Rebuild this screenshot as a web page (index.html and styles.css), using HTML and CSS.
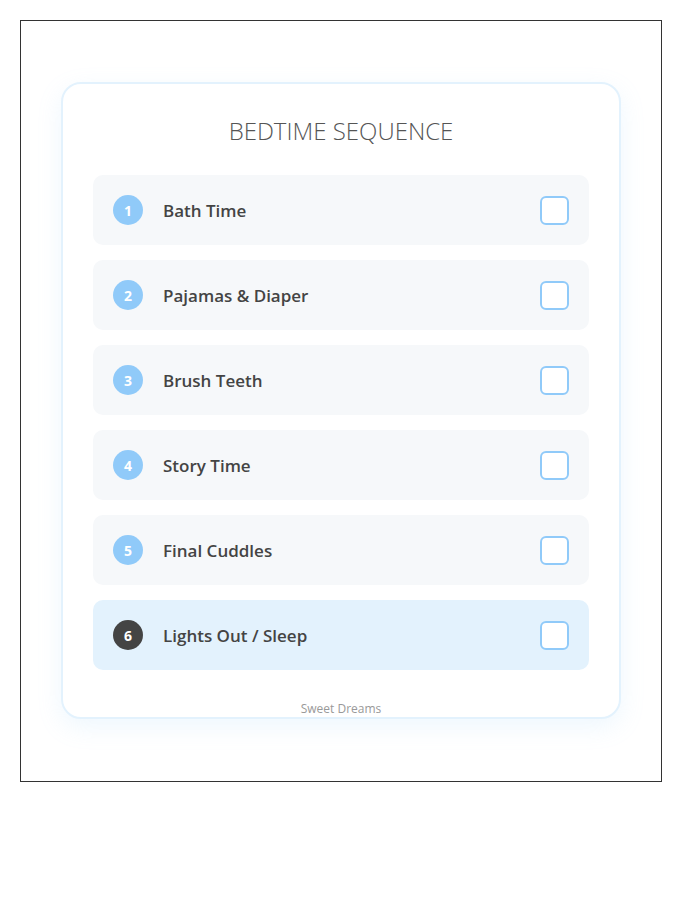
FILE: index.html
```html
<!DOCTYPE html>
<html lang="en">

<head>
    <meta charset="UTF-8">
    <meta name="viewport" content="width=device-width, initial-scale=1.0">
    <title>Bedtime Sequence</title>
    <link rel="stylesheet" href="styles.css">
</head>

<body>
    <div class="frame">
        <div class="card">
            <h1 class="title">Bedtime Sequence</h1>
            <ul class="steps">
                <li class="step">
                    <span class="num">1</span>
                    <span class="label">Bath Time</span>
                    <span class="check"></span>
                </li>
                <li class="step">
                    <span class="num">2</span>
                    <span class="label">Pajamas &amp; Diaper</span>
                    <span class="check"></span>
                </li>
                <li class="step">
                    <span class="num">3</span>
                    <span class="label">Brush Teeth</span>
                    <span class="check"></span>
                </li>
                <li class="step">
                    <span class="num">4</span>
                    <span class="label">Story Time</span>
                    <span class="check"></span>
                </li>
                <li class="step">
                    <span class="num">5</span>
                    <span class="label">Final Cuddles</span>
                    <span class="check"></span>
                </li>
                <!-- last step is highlighted -->
                <li class="step step-last">
                    <span class="num">6</span>
                    <span class="label">Lights Out / Sleep</span>
                    <span class="check"></span>
                </li>
            </ul>
            <p class="footer">Sweet Dreams</p>
        </div>
    </div>
</body>

</html>
```

FILE: styles.css
```css
body {
    margin: 0;
    padding: 20px;
    font-family: "Open Sans", "Noto Sans", sans-serif;
    background: #fff;
}

.frame {
    width: 642px;
    height: 762px;
    box-sizing: border-box;
    border: 1px solid #333;
    padding-top: 61px;
}

.card {
    width: 560px;
    box-sizing: border-box;
    margin: 0 auto;
    padding: 30px 30px 0;
    border: 2px solid #e3f2fd;
    border-radius: 20px;
    background: #fff;
    box-shadow: 0 8px 24px rgba(144, 202, 249, 0.15);
}

.title {
    margin: 0 0 27px;
    font-size: 24px;
    line-height: 34px;
    font-weight: 300;
    letter-spacing: 0;
    text-transform: uppercase;
    text-align: center;
    color: #555;
}

.steps {
    margin: 0;
    padding: 0;
    list-style: none;
    display: flex;
    flex-direction: column;
    gap: 15px;
}

.step {
    display: flex;
    align-items: center;
    gap: 20px;
    height: 70px;
    padding: 0 20px;
    background: #f6f8fa;
    border-radius: 10px;
}

.step-last {
    background: #e3f2fd;
}

.num {
    width: 30px;
    height: 30px;
    border-radius: 50%;
    background: #90caf9;
    color: #fff;
    font-size: 14px;
    font-weight: 700;
    display: flex;
    align-items: center;
    justify-content: center;
}

.step-last .num {
    background: #444;
}

.label {
    flex: 1;
    font-size: 17px;
    font-weight: 600;
    color: #444;
}

.check {
    width: 29px;
    height: 29px;
    box-sizing: border-box;
    border: 2px solid #90caf9;
    border-radius: 6px;
    background: #fff;
}

.footer {
    margin: 31px 0 0;
    font-size: 12px;
    line-height: 16px;
    text-align: center;
    color: #999;
}
```
